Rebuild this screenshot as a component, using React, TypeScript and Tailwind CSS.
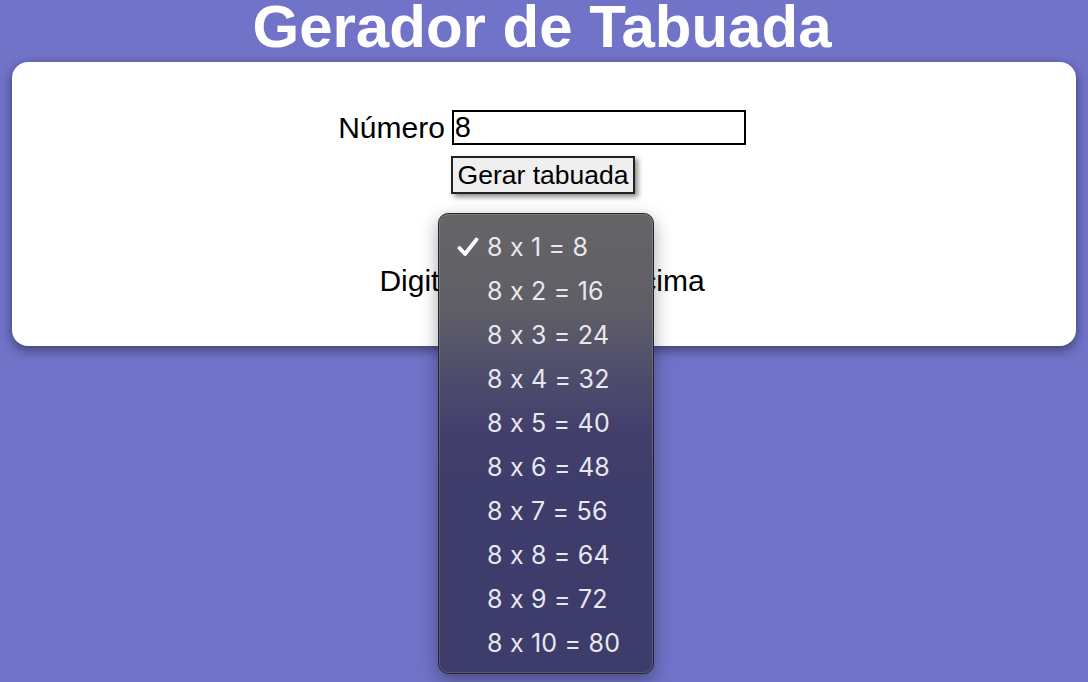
import React from "react";

const items = [1, 2, 3, 4, 5, 6, 7, 8, 9, 10];

export default function App() {
  return (
    <div
      className="relative min-h-[682px] w-full bg-[#7073c8] overflow-hidden"
      style={{ fontFamily: '"Liberation Sans", Arial, sans-serif' }}
    >
      <h1 className="h-[62px] pr-[4px] text-center text-[60px] leading-[54px] font-bold text-white">
        Gerador de Tabuada
      </h1>
      <div className="mx-[12px] h-[284px] rounded-[16px] bg-white shadow-[0_4px_12px_rgba(0,0,0,0.45)] flex flex-col items-center pt-[48px] text-black">
        <div className="flex items-center gap-[7px] mr-[4px]">
          <span className="text-[30px] leading-[35px]">Número</span>
          <input
            readOnly
            value="8"
            className="w-[294px] h-[35px] border-2 border-black bg-white px-[1px] text-[29px] leading-[31px] text-black outline-none"
          />
        </div>
        <button className="mt-[11px] mr-[2px] h-[38px] w-[184px] border-2 border-[#222] bg-[#efefef] text-[26.5px] leading-[34px] text-black shadow-[3px_3px_5px_rgba(0,0,0,0.45)]">
          Gerar tabuada
        </button>
        <p className="mt-[70px] mr-[4px] text-[30px] leading-[34px]">Digite um número acima</p>
      </div>

      <div
        className="absolute left-[438px] top-[213px] w-[216px] h-[461px] rounded-[10px] border border-[#262626] shadow-[0_6px_18px_rgba(0,0,0,0.35)] bg-[linear-gradient(to_bottom,#656467_0%,#605f66_20%,#504e6c_34%,#433f6c_47%,#3d3c6b_62%,#3d3c6b_100%)] pt-[11px]"
        style={{ fontFamily: 'Inter, "Noto Sans", sans-serif' }}
      >
        <div className="absolute inset-0 rounded-[9px] border border-[rgba(255,255,255,0.14)] pointer-events-none" />
        {items.map((i) => (
          <div key={i} className="relative flex items-center h-[44px] text-[25px] text-[#e8e8ee] leading-[44px]">
            <span className="w-[48px] flex justify-end pr-[8px]">
              {i === 1 && (
                <svg width="22" height="20" viewBox="0 0 22 20">
                  <path
                    d="M2.5 11 L8 17 L19.5 2.5"
                    fill="none"
                    stroke="#ffffff"
                    strokeWidth="3.8"
                    strokeLinecap="round"
                    strokeLinejoin="round"
                  />
                </svg>
              )}
            </span>
            <span className="tracking-[0.2px]">{`8 x ${i} = ${8 * i}`}</span>
          </div>
        ))}
      </div>
    </div>
  );
}
